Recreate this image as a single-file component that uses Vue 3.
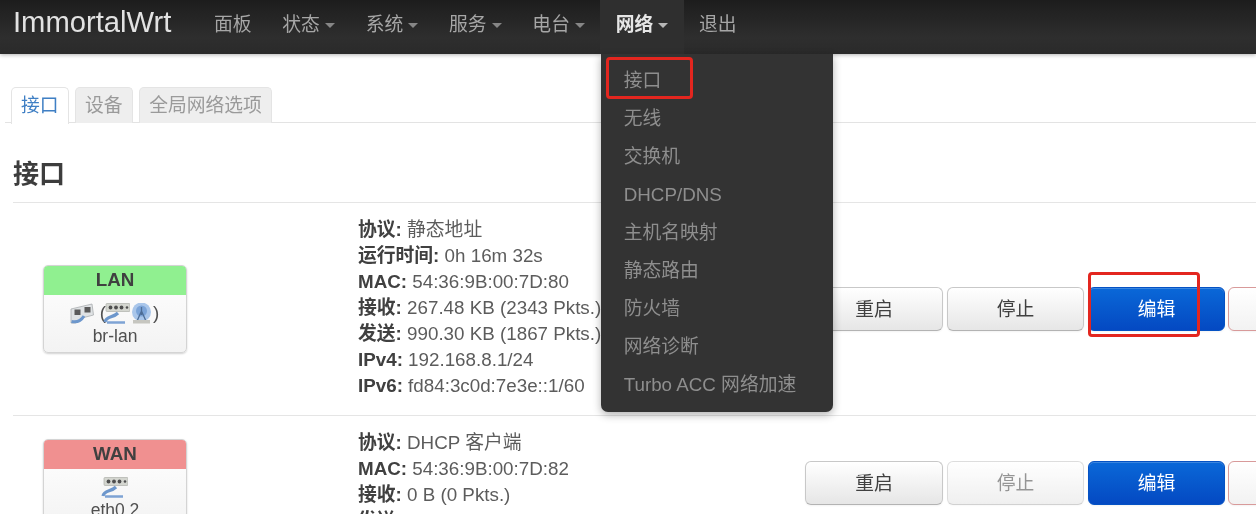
<script setup>
const navItems = [
  { label: '面板' },
  { label: '状态', caret: true },
  { label: '系统', caret: true },
  { label: '服务', caret: true },
  { label: '电台', caret: true },
  { label: '网络', caret: true, active: true },
  { label: '退出' }
]
const menuItems = ['接口', '无线', '交换机', 'DHCP/DNS', '主机名映射', '静态路由', '防火墙', '网络诊断', 'Turbo ACC 网络加速']
const tabs = [
  { label: '接口', active: true },
  { label: '设备' },
  { label: '全局网络选项' }
]
const rows = [
  {
    name: 'LAN', tone: 'lan', device: 'br-lan', bridge: true, stopDisabled: false, marked: true,
    info: [
      ['协议:', '静态地址'],
      ['运行时间:', '0h 16m 32s'],
      ['MAC:', '54:36:9B:00:7D:80'],
      ['接收:', '267.48 KB (2343 Pkts.)'],
      ['发送:', '990.30 KB (1867 Pkts.)'],
      ['IPv4:', '192.168.8.1/24'],
      ['IPv6:', 'fd84:3c0d:7e3e::1/60']
    ]
  },
  {
    name: 'WAN', tone: 'wan', device: 'eth0.2', bridge: false, stopDisabled: true, marked: false,
    info: [
      ['协议:', 'DHCP 客户端'],
      ['MAC:', '54:36:9B:00:7D:82'],
      ['接收:', '0 B (0 Pkts.)'],
      ['发送:', '0 B (0 Pkts.)']
    ]
  }
]
</script>

<template>
  <div class="page">
    <header class="navbar">
      <span class="brand">ImmortalWrt</span>
      <nav class="nav">
        <div v-for="item in navItems" :key="item.label" class="nav-item" :class="{ active: item.active }">
          {{ item.label }}<i v-if="item.caret" class="caret"></i>
          <div v-if="item.active" class="menu">
            <div v-for="m in menuItems" :key="m" class="menu-item">{{ m }}</div>
            <div class="mark mark-menu"></div>
          </div>
        </div>
      </nav>
    </header>

    <ul class="tabs">
      <li v-for="t in tabs" :key="t.label" class="tab" :class="{ active: t.active }">{{ t.label }}</li>
    </ul>

    <main class="content">
      <h2 class="title">接口</h2>
      <section v-for="row in rows" :key="row.name" class="row">
        <div class="card">
          <div class="card-head" :class="row.tone">{{ row.name }}</div>
          <div class="card-body">
            <div class="icons">
              <template v-if="row.bridge">
                <svg class="icon" viewBox="0 0 24 21" width="24" height="21">
                  <path d="M1 6 L22 1 L23.5 12 L12 15 L6 20 L1 20 Z" fill="#dfe2e4" stroke="#a9adb0" stroke-width=".8"/>
                  <rect x="4.5" y="6.5" width="6" height="5.5" fill="#5a5a5a"/>
                  <rect x="14.5" y="4" width="6" height="5.5" fill="#5a5a5a"/>
                  <path d="M1.5 18.5 C6 19.5 11 18 14 13" fill="none" stroke="#6d97cc" stroke-width="3"/>
                </svg>
                <span class="paren">(</span>
              </template>
              <svg class="icon" viewBox="0 0 27 21" width="27" height="21">
                <rect x="3" y="0.5" width="24" height="8" rx="1" fill="#d4d6d0" stroke="#aeb0aa" stroke-width=".7"/>
                <circle cx="7.5" cy="4.5" r="1.9" fill="#4f4f4f"/>
                <circle cx="13" cy="4.5" r="1.9" fill="#4f4f4f"/>
                <circle cx="18.5" cy="4.5" r="1.9" fill="#4f4f4f"/>
                <circle cx="24" cy="4.5" r="1.3" fill="#4f4f4f"/>
                <path d="M2 19 C3 13 10 15 15 10" fill="none" stroke="#6d97cc" stroke-width="3.2"/>
                <path d="M4 19.5 H22" fill="none" stroke="#7ea3d4" stroke-width="2.4"/>
              </svg>
              <template v-if="row.bridge">
                <svg class="icon" viewBox="0 0 23 21" width="23" height="21">
                  <circle cx="11.5" cy="9" r="9.5" fill="#a9c6ea"/>
                  <circle cx="11.5" cy="8" r="5.5" fill="#7ba4d8"/>
                  <path d="M11.5 4 V12 M7.5 17 L11.5 8 L15.5 17" fill="none" stroke="#4d6d96" stroke-width="1.3"/>
                  <rect x="3" y="17" width="17" height="3.5" fill="#c6c6c0"/>
                </svg>
                <span class="paren">)</span>
              </template>
            </div>
            <div class="device">{{ row.device }}</div>
          </div>
        </div>

        <div class="info">
          <div v-for="line in row.info" :key="line[0]" class="info-line">
            <b>{{ line[0] }}</b> {{ line[1] }}
          </div>
        </div>

        <div class="actions">
          <button class="btn restart">重启</button>
          <button class="btn stop" :class="{ disabled: row.stopDisabled }">停止</button>
          <button class="btn edit">
            编辑
            <span v-if="row.marked" class="mark mark-edit"></span>
          </button>
          <button class="btn remove">删除</button>
        </div>
      </section>
    </main>
  </div>
</template>

<style>
html, body { margin: 0; overflow: hidden; background: #fff; }
</style>

<style scoped>
.page {
  width: 1256px;
  height: 514px;
  overflow: hidden;
  background: #fff;
  color: #404040;
  font-family: "Liberation Sans", "Noto Sans CJK SC", sans-serif;
  font-size: 18.8px;
  line-height: 26px;
  filter: blur(.45px);
}
.navbar {
  height: 54px;
  display: flex;
  align-items: stretch;
  padding-left: 13px;
  background: linear-gradient(#1d1d1d, #2e2e2e 70%, #2a2a2a);
  box-shadow: 0 1px 4px rgba(0, 0, 0, .3);
  position: relative;
  z-index: 2;
}
.brand {
  width: 185.6px;
  color: #e2e2e2;
  font-size: 29.2px;
  line-height: 45px;
}
.nav { display: flex; }
.nav-item {
  position: relative;
  padding: 12px 15.4px 0;
  color: #a6a6a6;
}
.nav-item.active { background: #2f2f2f; color: #e6e6e6; font-weight: 700; }
.caret {
  display: inline-block;
  width: 0;
  height: 0;
  margin-left: 5px;
  vertical-align: 3px;
  border-top: 5px solid currentColor;
  border-left: 5px solid transparent;
  border-right: 5px solid transparent;
  opacity: .75;
}
.menu {
  position: absolute;
  top: 54px;
  left: .4px;
  width: 232px;
  height: 358px;
  box-sizing: border-box;
  padding: 8px 0;
  background: #333;
  border-radius: 0 0 7px 7px;
  box-shadow: 0 3px 8px rgba(0, 0, 0, .3);
  font-weight: 400;
}
.menu-item {
  height: 38px;
  line-height: 38px;
  padding-left: 23px;
  color: #8e8e8e;
  white-space: nowrap;
}
.mark {
  position: absolute;
  box-sizing: border-box;
  border: 3px solid #e3261f;
  border-radius: 4px;
  pointer-events: none;
}
.mark-menu { left: 5px; top: 3px; width: 87px; height: 42px; }
.mark-edit { left: -1px; top: -16px; width: 112px; height: 65px; }

.tabs {
  display: flex;
  gap: 6.5px;
  list-style: none;
  margin: 33px 0 0 5px;
  padding: 0 0 0 6px;
  height: 35px;
  border-bottom: 1px solid #e3e3e3;
}
.tab {
  padding: 5px 9px 0;
  border: 1px solid #e4e4e4;
  border-bottom: 0;
  border-radius: 5px 5px 0 0;
  background: #eee;
  color: #9a9a9a;
  height: 30px;
}
.tab.active {
  background: #fff;
  color: #3f7fc4;
  height: 31px;
}
.content { padding: 0 0 0 13px; }
.title {
  margin: 0;
  padding: 35px 0 12px;
  font-size: 26px;
  line-height: 32px;
  font-weight: 700;
  color: #3d3d3d;
}
.row {
  display: grid;
  grid-template-columns: 345px 447px 1fr;
  align-items: center;
  border-top: 1px solid #e5e5e5;
  padding: 14px 0 16px;
}
.card {
  width: 144px;
  height: 88px;
  box-sizing: border-box;
  margin: 2px 0 0 30px;
  border: 1px solid #d4d4d4;
  border-radius: 5px;
  overflow: hidden;
  box-shadow: 0 1px 2px rgba(0, 0, 0, .18);
  background: linear-gradient(#fff, #f3f3f3);
  text-align: center;
}
.card-head {
  height: 29px;
  line-height: 28px;
  font-weight: 700;
  color: #404040;
}
.card-head.lan { background: #90f090; }
.card-head.wan { background: #f09090; }
.card-body { padding-top: 7px; color: #505050; }
.icons {
  display: flex;
  justify-content: center;
  align-items: center;
  height: 22px;
  margin-left: -1px;
}
.icon { display: block; flex: none; }
.paren { line-height: 22px; margin: 0 -3px 0 6px; }
.paren:last-child { margin: 0; }
.device { font-size: 17.5px; line-height: 24px; }
.info { white-space: nowrap; color: #5c5c5c; }
.info-line { height: 26px; }
.info-line b { color: #404040; }
.actions {
  display: flex;
  gap: 4px;
  white-space: nowrap;
  margin-top: 1px;
}
.btn {
  position: relative;
  flex: none;
  width: 138px;
  height: 44px;
  padding: 0 0 2px;
  border: 1px solid #c8c8c8;
  border-bottom-color: #b3b3b3;
  border-radius: 6px;
  background: linear-gradient(#fff, #e6e6e6);
  box-shadow: inset 0 1px 0 rgba(255, 255, 255, .2), 0 1px 2px rgba(0, 0, 0, .05);
  color: #404040;
  font-family: inherit;
  font-size: 18.8px;
}
.btn.stop { width: 137px; }
.btn.stop.disabled { opacity: .6; color: #505050; }
.btn.edit {
  width: 137px;
  border-color: #0552c4;
  background: linear-gradient(#0a68d8, #0449c2);
  color: #fff;
}
.btn.remove {
  border-color: #d89a9a;
  background: linear-gradient(#fff, #f2f2f2);
  color: #c03030;
  margin-left: -1px;
}
</style>
